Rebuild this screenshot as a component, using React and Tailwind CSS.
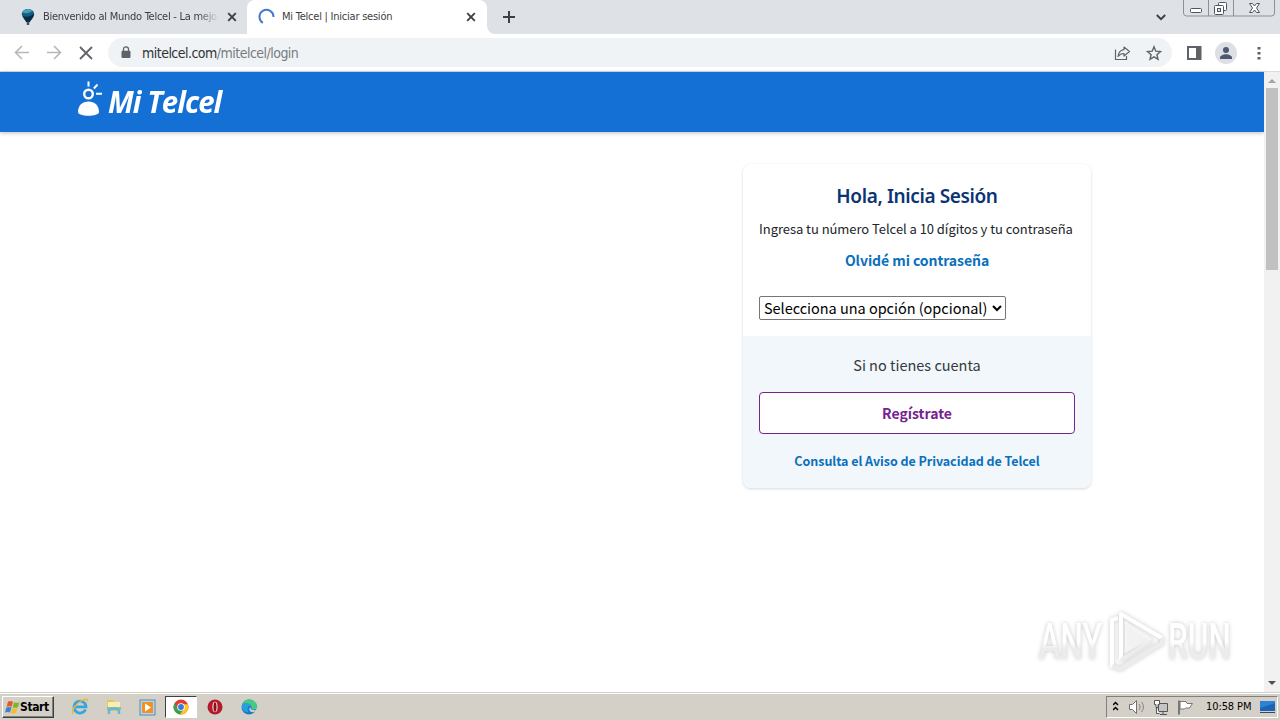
import { useState } from 'react';

/* ---------- TAB ICONS ---------- */

const BalloonIcon = () => (
  <svg width="16" height="18" viewBox="0 0 16 18" className="shrink-0">
    <path d="M8 1C4 1 1.600 3.600 1.800 6.600 2 9.400 5 12 6.700 14.500h2.600C11 12 14 9.400 14.200 6.600 14.400 3.600 12 1 8 1Z" fill="#12607f" />
    <path d="M8 1C5 1 3 2.500 2.300 4.600 5 6 9 5.500 12.500 2.800 11.400 1.600 9.800 1 8 1Z" fill="#4b9ab8" />
    <path d="M3 8c3 1.500 7 1 11-2.500-.1 3.500-3 6.500-4.700 9H6.700C5.400 12.400 3.600 10.200 3 8Z" fill="#0b2c49" />
    <rect x="6.800" y="15" width="2.400" height="2" fill="#5b4a44" />
  </svg>
);

const CloseIcon = () => (
  <svg width="10" height="10" viewBox="0 0 10 10" className="shrink-0">
    <path d="M1.200 1.200l7.600 7.600M8.800 1.200L1.200 8.800" stroke="#3c4043" strokeWidth="1.900" />
  </svg>
);

const Spinner = () => (
  <svg width="18" height="18" viewBox="0 0 18 18" className="shrink-0">
    <path d="M4.800 14.800A7 7 0 1 1 15.500 9" fill="none" stroke="#4577cf" strokeWidth="2" />
  </svg>
);

/* ---------- BROWSER ---------- */

const TabStrip = () => (
  <div className="relative flex h-[34px] bg-[#dee1e6] font-['DejaVu_Sans_Condensed','DejaVu_Sans',sans-serif] text-[11px] text-[#3c4043]">
    <div className="flex w-[247px] items-center pl-5 pr-[10px]">
      <BalloonIcon />
      <span className="ml-[7px] mt-px w-[176px] overflow-hidden whitespace-nowrap tracking-[-0.26px] [mask-image:linear-gradient(to_right,#000_88%,transparent)]">
        Bienvenido al Mundo Telcel - La mejor
      </span>
      <span className="ml-auto flex"><CloseIcon /></span>
    </div>
    <div className="flex w-[240px] items-center rounded-t-lg bg-white pl-[11px] pr-[11px]">
      <Spinner />
      <span className="ml-[6px] mt-px whitespace-nowrap tracking-[-0.23px]">Mi Telcel | Iniciar sesión</span>
      <span className="ml-auto flex"><CloseIcon /></span>
    </div>
    <svg width="8" height="8" viewBox="0 0 8 8" className="mt-[26px]">
      <path d="M0 0v8h8A8 8 0 0 1 0 0Z" fill="#fff" />
    </svg>
    <svg width="12" height="12" viewBox="0 0 12 12" className="ml-2 mt-[11px]">
      <path d="M6 0v12M0 6h12" stroke="#3c4043" strokeWidth="2" />
    </svg>
    <svg width="10" height="7" viewBox="0 0 10 7" className="ml-auto mr-[17px] mt-[14px]">
      <path d="M.8 1L5 5.200 9.200 1" fill="none" stroke="#3c4043" strokeWidth="1.900" />
    </svg>
    <svg width="93" height="17" viewBox="0 0 93 17" className="mr-[4px]">
      <path d="M.5-2v15a3 3 0 0 0 3 3h85a3 3 0 0 0 3-3V-2M25.500 0v16M50.500 0v16" fill="none" stroke="#8c9099" />
      <rect x="7.500" y="8.500" width="11" height="4" rx="1" fill="#fff" stroke="#50555f" />
      <rect x="35.500" y="2.500" width="8" height="8" rx="1" fill="#fff" stroke="#50555f" />
      <rect x="31.500" y="5.500" width="9" height="9" rx="1" fill="#fff" stroke="#50555f" />
      <rect x="34.500" y="8.500" width="3" height="3" fill="#dee1e6" stroke="#50555f" />
      <path d="M66.500 3.500h3l2 2.500 2-2.500h3l-3 4.500 3 4.500h-3l-2-2.500-2 2.500h-3l3-4.500Z" fill="#fff" stroke="#50555f" />
    </svg>
  </div>
);

const Toolbar = () => (
  <div className="flex h-[38px] items-center border-b border-[#d9dce0] bg-white pl-[14px] pr-[16px]">
    <svg width="80" height="16" viewBox="0 0 80 16" className="shrink-0" fill="none">
      <path d="M15 7.500H2M8 1L1.500 7.500 8 14M33 7.500h13M40 1L46.500 7.500 40 14" stroke="#b5b7ba" strokeWidth="1.600" />
      <path d="M66 2l12 12M78 2L66 14" stroke="#5f6368" strokeWidth="1.800" />
    </svg>

    {/* ADDRESS BAR */}
    <div className="ml-[14px] flex h-[29px] w-[1064px] items-center rounded-full bg-[#f0f3f5] pl-[13px] pr-[10px]">
      <svg width="10" height="13" viewBox="0 0 10 13">
        <path d="M2.500 5.500V3.300a2.500 2.500 0 0 1 5 0v2.200" fill="none" stroke="#5f6368" strokeWidth="1.300" />
        <rect x=".5" y="4.800" width="9" height="7.200" rx="1" fill="#5f6368" />
      </svg>
      <span className="ml-[11px] mt-px whitespace-nowrap font-['DejaVu_Sans_Condensed','DejaVu_Sans',sans-serif] text-[14px] tracking-[-0.52px] text-[#777b80]">
        <span className="text-[#303236]">mitelcel.com</span>/mitelcel/login
      </span>
      <svg width="48" height="16" viewBox="0 0 48 16" className="ml-auto" fill="none" stroke="#5f6368">
        <path d="M1.500 4.500v10h11V11" strokeWidth="1.200" />
        <path d="M10 2l5.500 4.500L10 11V8.500C7 8.500 5.500 9.500 4 11.500 4.500 7.500 6.500 5 10 4.600Z" strokeWidth="1.200" strokeLinejoin="round" />
        <path d="M40 1.800l1.800 4.400 4.700.4-3.600 3.100 1.100 4.600-4-2.500-4 2.500 1.100-4.600-3.600-3.100 4.700-.4Z" strokeWidth="1.400" />
      </svg>
    </div>

    <svg width="15" height="14" viewBox="0 0 15 14" className="ml-[15px]">
      <path d="M1 1h12.500v12H1Z" fill="none" stroke="#5f6368" strokeWidth="2" />
      <rect x="9" y="1" width="5" height="12" fill="#5f6368" />
    </svg>
    <svg width="22" height="22" viewBox="0 0 22 22" className="ml-[13px]">
      <circle cx="11" cy="11" r="11" fill="#dcdfe4" />
      <circle cx="11" cy="8" r="3" fill="#4d5872" />
      <path d="M5 17v-1.500c0-2 3.500-3.300 6-3.300s6 1.300 6 3.300V17Z" fill="#4d5872" />
    </svg>
    <svg width="4" height="14" viewBox="0 0 4 14" className="ml-auto mr-[3px]">
      <path d="M.5 1h3v2.500h-3ZM.5 6h3v2.500h-3ZM.5 11h3v2.500h-3Z" fill="#5f6368" />
    </svg>
  </div>
);

const Scrollbar = () => (
  <div className="flex w-4 shrink-0 flex-col items-center bg-[#f1f1f1]">
    <svg width="16" height="16" viewBox="0 0 16 16"><path d="M4 11h8L8 7Z" fill="#a3a3a3" /></svg>
    <div className="h-[182px] w-[12px] bg-[#c1c1c1]" />
    <svg width="16" height="16" viewBox="0 0 16 16" className="mb-px mt-auto"><path d="M4 6h8l-4 4Z" fill="#505050" /></svg>
  </div>
);

/* ---------- PAGE ---------- */

const Header = () => (
  <header className="flex h-[60px] bg-[#1470d4] pl-[77px] shadow-[0_1px_4px_rgba(0,0,0,0.25)]">
    <svg width="26" height="36" viewBox="0 0 26 36" className="mt-2 shrink-0">
      <circle cx="11.500" cy="14" r="4.300" fill="none" stroke="#fff" strokeWidth="2.400" />
      <path d="M11.500 1.500v5M20.500 4.500l-3.600 4M19 13.800h6" stroke="#fff" strokeWidth="2" />
      <path d="M1 32C1 25.500 5.500 21.500 11.500 21.500S22 25.500 22 32c0 5-21 5-21 0Z" fill="#fff" />
    </svg>
    <div className="ml-[5px] mt-[11px] h-9 origin-left scale-x-[0.945] whitespace-nowrap font-['Open_Sans',sans-serif] text-[31px] font-bold italic leading-9 tracking-[-1px] text-white">
      Mi Telcel
    </div>
  </header>
);

const LoginCard = () => {
  const [option, setOption] = useState('');

  return (
    <div className="ml-[743px] mt-8 h-[324px] w-[348px] overflow-hidden rounded-lg bg-white text-center shadow-[0_1px_3px_rgba(0,0,0,0.16)]">
      <div className="h-[172px] px-4 pt-[18px]">
        <h1 className="font-['Noto_Sans',sans-serif] text-[19px] font-semibold leading-7 tracking-[-0.38px] text-[#0b3472]">Hola, Inicia Sesión</h1>
        <p className="mt-[9px] whitespace-nowrap text-left text-[13px] leading-5 tracking-[-0.05px] text-[#212529]">
          Ingresa tu número Telcel a 10 dígitos y tu contraseña
        </p>
        <a href="#" className="mt-[9px] block text-[14px] font-bold leading-6 tracking-[-0.07px] text-[#0a70bd]">Olvidé mi contraseña</a>
        <div className="relative mt-[24px] flex h-6 w-[247px]">
          <select
            value={option}
            onChange={(e) => setOption(e.target.value)}
            className="h-6 w-full appearance-none rounded-[2px] border border-[#767676] bg-white pl-1 text-[14.5px] leading-[22px] tracking-[-0.03px] text-black"
          >
            <option value="">Selecciona una opción (opcional)</option>
          </select>
          <svg width="10" height="7" viewBox="0 0 10 7" className="pointer-events-none absolute right-1 top-[9px]">
            <path d="M1 1l4 4 4-4" fill="none" stroke="#000" strokeWidth="2" />
          </svg>
        </div>
      </div>
      <div className="h-[152px] bg-[#f1f7fb] px-4 pt-[17px]">
        <p className="text-[14.5px] leading-6 text-[#343a40]">Si no tienes cuenta</p>
        <button className="mt-[15px] block h-[42px] w-full rounded-[4px] border border-[#762290] bg-white text-[14px] font-bold text-[#762290]">
          Regístrate
        </button>
        <a href="#" className="mt-[17px] block whitespace-nowrap text-[12.5px] font-bold leading-5 tracking-[-0.05px] text-[#0a70bd]">
          Consulta el Aviso de Privacidad de Telcel
        </a>
      </div>
    </div>
  );
};

const Watermark = () => (
  <div className="pointer-events-none absolute left-[1039px] top-[608px] flex h-[68px] w-[200px] font-['Roboto',sans-serif] text-[50px] font-medium leading-[68px] drop-shadow-[0_0_2px_rgba(0,0,0,0.22)]">
    <div className="w-[67px] shrink-0">
      <span className="inline-block origin-left scale-x-[0.64] bg-linear-to-b from-white from-50% to-[#ececec] to-60% bg-clip-text text-transparent">ANY</span>
    </div>
    <svg width="62" height="68" viewBox="0 0 62 68" className="shrink-0" fill="none" strokeWidth="4" strokeLinejoin="round">
      <path d="M15 52V6L56 30M12 10L6 12V60" stroke="#fff" />
      <path d="M56 30v5L14 61l-8-3M15 52L46 32" stroke="#ececec" />
      <path d="M19 13v32l27-14Z" fill="#fff" fillOpacity="0.6" />
    </svg>
    <div className="w-[66px] shrink-0">
      <span className="inline-block origin-left scale-x-[0.63] bg-linear-to-b from-white from-50% to-[#ececec] to-60% bg-clip-text text-transparent">RUN</span>
    </div>
  </div>
);

/* ---------- TASKBAR ---------- */

const Taskbar = () => (
  <div className="flex h-[28px] items-center border-t border-[#d4d0c8] bg-[#d4d0c8] font-['DejaVu_Sans_Condensed','DejaVu_Sans',sans-serif] text-black shadow-[inset_0_1px_0_#fff]">
    <button className="ml-[2px] mt-px flex h-[22px] w-[52px] items-center border border-b-[#404040] border-l-white border-r-[#404040] border-t-white pl-[2px] text-[12px] font-bold tracking-[-0.4px] shadow-[inset_-1px_-1px_0_#808080]">
      <svg width="15" height="15" viewBox="0 0 15 15" className="shrink-0">
        <path d="M3 1.500c2-1 3.300-.7 5 .2L6.700 6.800C5 6 3.500 6 1.700 6.700Z" fill="#e5582b" />
        <path d="M9 2.200c2 .8 3.300.8 5.500 0l-1.600 5c-1.700.8-3.500.8-5.200 0Z" fill="#79b82e" />
        <path d="M1.400 7.500C3 6.800 4.700 6.800 6.500 7.600L5 12.500c-1.700-.8-3.200-.8-5 0Z" fill="#3a82cb" />
        <path d="M7.400 8c1.700.8 3.400.8 5.200 0L11 13c-1.800.8-3.300.8-5 0Z" fill="#f5bd2d" />
      </svg>
      Start
    </button>

    {/* PINNED APPS */}
    <svg width="18" height="18" viewBox="0 0 18 18" className="ml-[17px] mt-px">
      <path d="M14.500 11.500A6 6 0 1 1 15 8.800H4.500" fill="none" stroke="#39a5df" strokeWidth="2.800" />
      <path d="M2 16C-.5 13 5 6 10 3c4-2.500 7-2.500 6.500.5" fill="none" stroke="#e8b83a" strokeWidth="1.400" />
    </svg>
    <svg width="18" height="18" viewBox="0 0 18 18" className="ml-[16px] mt-px">
      <path d="M2 2h6l1 2h6v9H2Z" fill="#e5c561" />
      <path d="M3 4h12v6H3Z" fill="#fbefae" />
      <path d="M2 9h14v3H2Z" fill="#8cc0a0" />
      <path d="M4 16v-3c0-3 10-3 10 0v3" fill="none" stroke="#67b5dd" strokeWidth="2.400" />
    </svg>
    <svg width="17" height="17" viewBox="0 0 17 17" className="ml-[16px] mt-px">
      <rect x="1" y="1" width="15" height="15" fill="#b5d6ee" stroke="#508bb9" />
      <rect x="3" y="3" width="11" height="11" fill="#f4901f" />
      <path d="M6 4.500v8l6-4Z" fill="#fff" />
    </svg>
    <div className="ml-[9px] mt-px flex h-[22px] w-[32px] items-center justify-center border border-b-white border-l-[#404040] border-r-white border-t-[#404040] bg-white">
      <svg width="16" height="16" viewBox="0 0 16 16">
        <circle cx="8" cy="8" r="7.500" fill="#e23d30" />
        <path d="M1.500 4.300A7.500 7.500 0 0 0 7 15.400L10.500 10 5 9.500Z" fill="#35a552" />
        <path d="M15 5.200A7.500 7.500 0 0 1 7 15.400L11.200 9 10 5.200Z" fill="#f9c827" />
        <circle cx="8" cy="8" r="3.800" fill="#fff" />
        <circle cx="8" cy="8" r="2.900" fill="#3978df" />
      </svg>
    </div>
    <svg width="16" height="16" viewBox="0 0 16 16" className="ml-[10px] mt-px">
      <circle cx="8" cy="8" r="7.500" fill="#b5192a" />
      <ellipse cx="8" cy="8" rx="2.600" ry="5.200" fill="#f3e3e3" />
      <ellipse cx="8" cy="8" rx="1.500" ry="4.800" fill="#8b0f1a" />
    </svg>
    <svg width="17" height="16" viewBox="0 0 17 16" className="ml-[18px] mt-px">
      <circle cx="8" cy="8" r="7.500" fill="#167cc8" />
      <path d="M1 6C2.500.8 7-.3 10.500.8c4.500 1.400 6.500 5.500 5.500 8.200-1 2.200-5 2.200-5.500.7C11.500 5 4.500 3 1 6Z" fill="#45c983" />
      <path d="M1 6c4-2.800 8-1.800 9 1-3-1-4.500 3-2.500 6C4 14 .5 10.500 1 6Z" fill="#279fe1" />
      <path d="M9.500 8c-.5 2 1.500 4.200 6 3-1 1.800-3.500 2.500-5 2C7.500 12 8 9 9.500 8Z" fill="#d4d0c8" />
    </svg>

    {/* TRAY */}
    <div className="ml-auto mr-[2px] mt-px flex h-[22px] w-[172px] items-center border border-b-white border-l-[#808080] border-r-white border-t-[#808080] pl-[6px]">
      <svg width="82" height="18" viewBox="0 0 82 18" className="shrink-0" fill="none">
        <path d="M0 7l2.500-2.500L5 7M0 12l2.500-2.500L5 12" stroke="#000" strokeWidth="1.500" />
        <path d="M16.500 6.500h3l4-4v13l-4-4h-3Z" fill="#fff" stroke="#707070" />
        <path d="M26 6c1.500 2 1.500 4 0 6M28.500 4c2.500 3 2.500 7 0 10" stroke="#808080" />
        <path d="M45.500 5.500h9v8h-9ZM47 16.500h7M50 13.500v3" fill="#c4c4c4" stroke="#555" />
        <path d="M41.500 2.500h5v4h-1.500v3h-2v-3h-1.500ZM43.500 10v5.500h3" fill="#fff" stroke="#555" />
        <path d="M66 2.500v14" stroke="#777" strokeWidth="2" />
        <path d="M67 3.500h6l1 2h5.500l-3 4.500h-4l-1 1h-4.500Z" fill="#fff" stroke="#777" />
      </svg>
      <span className="ml-[11px] mt-px whitespace-nowrap text-[11px] tracking-[-0.1px]">10:58 PM</span>
      <svg width="17" height="14" viewBox="0 0 17 14" className="ml-auto mr-px shrink-0">
        <path d="M1 1h15v10H1Z" fill="#1c64b7" />
        <path d="M1 1h15v2L1 8Z" fill="#2f81d3" />
        <path d="M1 12.500h15" stroke="#3c4855" />
      </svg>
    </div>
  </div>
);

const App = () => (
  <div className="relative flex h-[720px] w-[1280px] flex-col overflow-hidden bg-white">
    <TabStrip />
    <Toolbar />
    <div className="flex flex-1">
      <main className="w-[1264px] font-['Noto_Sans_CJK_SC',sans-serif]">
        <Header />
        <LoginCard />
      </main>
      <Scrollbar />
    </div>
    <Taskbar />
    <Watermark />
  </div>
);

export default App;
